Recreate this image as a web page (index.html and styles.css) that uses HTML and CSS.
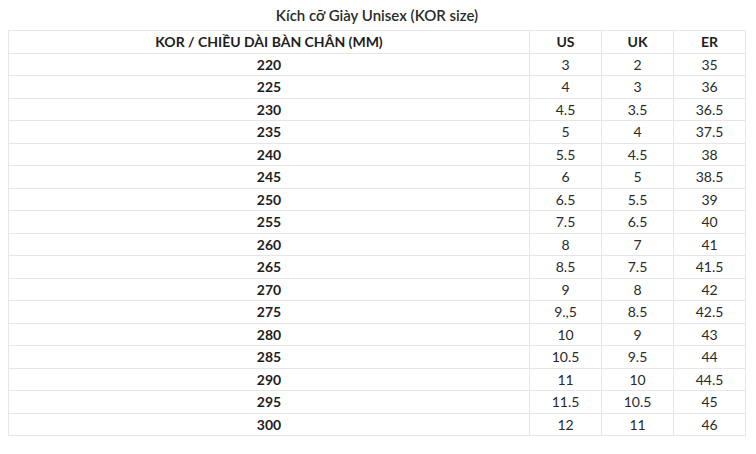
FILE: index.html
```html
<!DOCTYPE html>
<html lang="vi">
<head>
<meta charset="utf-8">
<title>Kích cỡ Giày Unisex</title>
<link rel="stylesheet" href="styles.css">
</head>
<body>
<div class="page">
  <h1 class="title">Kích cỡ Giày Unisex (KOR size)</h1>
  <table class="size-table">
    <thead>
      <tr><th class="c-kor">KOR / CHIỀU DÀI BÀN CHÂN (MM)</th><th class="c-n">US</th><th class="c-n">UK</th><th class="c-n">ER</th></tr>
    </thead>
    <tbody>
      <tr><td class="kor">220</td><td>3</td><td>2</td><td>35</td></tr>
      <tr><td class="kor">225</td><td>4</td><td>3</td><td>36</td></tr>
      <tr><td class="kor">230</td><td>4.5</td><td>3.5</td><td>36.5</td></tr>
      <tr><td class="kor">235</td><td>5</td><td>4</td><td>37.5</td></tr>
      <tr><td class="kor">240</td><td>5.5</td><td>4.5</td><td>38</td></tr>
      <tr><td class="kor">245</td><td>6</td><td>5</td><td>38.5</td></tr>
      <tr><td class="kor">250</td><td>6.5</td><td>5.5</td><td>39</td></tr>
      <tr><td class="kor">255</td><td>7.5</td><td>6.5</td><td>40</td></tr>
      <tr><td class="kor">260</td><td>8</td><td>7</td><td>41</td></tr>
      <tr><td class="kor">265</td><td>8.5</td><td>7.5</td><td>41.5</td></tr>
      <tr><td class="kor">270</td><td>9</td><td>8</td><td>42</td></tr>
      <tr><td class="kor">275</td><td>9.,5</td><td>8.5</td><td>42.5</td></tr>
      <tr><td class="kor">280</td><td>10</td><td>9</td><td>43</td></tr>
      <tr><td class="kor">285</td><td>10.5</td><td>9.5</td><td>44</td></tr>
      <tr><td class="kor">290</td><td>11</td><td>10</td><td>44.5</td></tr>
      <tr><td class="kor">295</td><td>11.5</td><td>10.5</td><td>45</td></tr>
      <tr><td class="kor">300</td><td>12</td><td>11</td><td>46</td></tr>
    </tbody>
  </table>
</div>
</body>
</html>
```
FILE: styles.css
```css
html, body {
  margin: 0;
  padding: 0;
  background: #ffffff;
}
.page {
  padding: 0 10px 0 8px;
  font-family: "Lato", "Open Sans", sans-serif;
  color: #222;
}
.title {
  margin: 0;
  height: 30px;
  line-height: 30px;
  text-align: center;
  font-size: 15px;
  font-weight: 600;
  color: #2a2a2a;
}
.size-table {
  width: 100%;
  border-collapse: collapse;
  table-layout: fixed;
}
.size-table th,
.size-table td {
  border: 1px solid #e6e6e6;
  padding: 0;
  height: 21.5px;
  text-align: center;
  vertical-align: middle;
  font-size: 14px;
}
.size-table th {
  font-weight: 700;
  color: #1e1e1e;
}
.c-kor { width: auto; }
.c-n { width: 71px; }
.size-table td {
  font-weight: 400;
  color: #2a2a2a;
  font-size: 14px;
}
.size-table td.kor {
  font-weight: 700;
  color: #1e1e1e;
  font-size: 14px;
}
```
